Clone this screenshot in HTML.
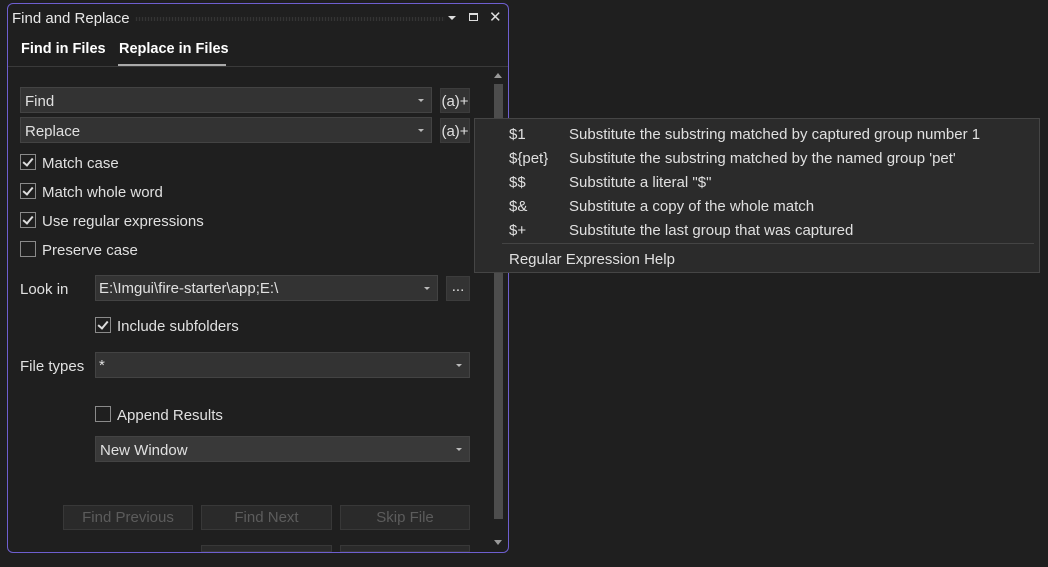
<!DOCTYPE html>
<html><head><style>
*{box-sizing:border-box;margin:0;padding:0}
body{width:1048px;height:567px;background:#1f1f1f;font-family:"Liberation Sans",sans-serif;font-size:15px;color:#e0e0e0;position:relative;overflow:hidden}
.a{position:absolute}
.win{left:7px;top:3px;width:502px;height:550px;border:1px solid #6e5fd0;border-radius:6px;background:#1f1f1f;overflow:hidden}
.combo{background:#333;border:1px solid #434343;height:26px;padding-left:4px;line-height:27px}
.combo:after{content:"";position:absolute;right:7px;top:11px;border-left:3px solid transparent;border-right:3px solid transparent;border-top:3px solid #bbb}
.btn{background:#333;border:1px solid #3c3c3c;text-align:center;line-height:26px}
.cb{width:16px;height:16px;border:1px solid #8a8a8a;background:#1f1f1f}
.cb.on:after{content:"";position:absolute;left:4px;top:1px;width:4px;height:8px;border-right:2px solid #ddd;border-bottom:2px solid #ddd;transform:rotate(40deg)}
.dis{background:#2a2a2a;border:1px solid #383838;color:#5c5c5c;text-align:center;line-height:24px;height:25px}
.t{margin-top:1px}
</style></head><body>
<div class="a win">
 <div class="a" style="left:4px;top:6px;color:#e8e8e8">Find and Replace</div>
 <div class="a" style="left:127px;top:13px;width:310px;height:4px;background-image:radial-gradient(#4a4a4a 0.7px,transparent 0.9px);background-size:3px 2px"></div>
 <div class="a" style="left:440px;top:12px;border-left:4px solid transparent;border-right:4px solid transparent;border-top:4px solid #ddd"></div>
 <div class="a" style="left:461px;top:9px;width:9px;height:8px;border:1px solid #ddd;border-top-width:2px"></div>
 <div class="a" style="left:481px;top:4px;font-size:15px;color:#ddd">✕</div>
 <div class="a" style="left:13px;top:37px;font-weight:bold;color:#fff;font-size:14.5px">Find in Files</div>
 <div class="a" style="left:111px;top:37px;font-weight:bold;color:#fff;font-size:14.5px">Replace in Files</div>
 <div class="a" style="left:110px;top:60px;width:108px;height:2px;background:#aaa"></div>
 <div class="a" style="left:0;top:62px;width:502px;height:1px;background:#3a3a3a"></div>
 <div class="a" style="left:484px;top:64px;width:13px;height:486px;background:#1f1f1f"></div>
 <div class="a" style="left:486px;top:80px;width:9px;height:435px;background:#4d4d4d"></div>
 <div class="a" style="left:486px;top:69px;border-left:4px solid transparent;border-right:4px solid transparent;border-bottom:5px solid #999"></div>
 <div class="a" style="left:486px;top:536px;border-left:4px solid transparent;border-right:4px solid transparent;border-top:5px solid #999"></div>
</div>
<div class="a combo" style="left:20px;top:87px;width:412px">Find</div>
<div class="a btn" style="left:440px;top:88px;width:30px;height:25px;line-height:25px">(a)+</div>
<div class="a combo" style="left:20px;top:117px;width:412px">Replace</div>
<div class="a btn" style="left:440px;top:118px;width:30px;height:25px;line-height:25px">(a)+</div>

<div class="a cb on" style="left:20px;top:154px"></div><div class="a t" style="left:42px;top:154px">Match case</div>
<div class="a cb on" style="left:20px;top:183px"></div><div class="a t" style="left:42px;top:183px">Match whole word</div>
<div class="a cb on" style="left:20px;top:212px"></div><div class="a t" style="left:42px;top:212px">Use regular expressions</div>
<div class="a cb" style="left:20px;top:241px"></div><div class="a t" style="left:42px;top:241px">Preserve case</div>

<div class="a" style="left:20px;top:281px">Look in</div>
<div class="a combo" style="left:95px;top:275px;width:343px;padding-left:3px;line-height:25px">E:\Imgui\fire-starter\app;E:\</div>
<div class="a btn" style="left:446px;top:276px;width:24px;height:25px;line-height:20px">...</div>
<div class="a cb on" style="left:95px;top:317px"></div><div class="a t" style="left:117px;top:317px">Include subfolders</div>
<div class="a" style="left:20px;top:358px">File types</div>
<div class="a combo" style="left:95px;top:352px;width:375px;padding-left:3px;line-height:25px">*</div>
<div class="a cb" style="left:95px;top:406px"></div><div class="a t" style="left:117px;top:406px">Append Results</div>
<div class="a combo" style="left:95px;top:436px;width:375px;background:#393939">New Window</div>

<div class="a dis" style="left:63px;top:505px;width:130px">Find Previous</div>
<div class="a dis" style="left:201px;top:505px;width:131px">Find Next</div>
<div class="a dis" style="left:340px;top:505px;width:130px">Skip File</div>
<div class="a dis" style="left:201px;top:545px;width:131px;height:7px"></div>
<div class="a dis" style="left:340px;top:545px;width:130px;height:7px"></div>

<div class="a" style="left:474px;top:118px;width:566px;height:155px;background:#2b2b2b;border:1px solid #454545">
 <div class="a" style="left:34px;top:7px">$1</div><div class="a" style="left:94px;top:7px">Substitute the substring matched by captured group number 1</div>
 <div class="a" style="left:34px;top:31px">${pet}</div><div class="a" style="left:94px;top:31px">Substitute the substring matched by the named group 'pet'</div>
 <div class="a" style="left:34px;top:55px">$$</div><div class="a" style="left:94px;top:55px">Substitute a literal "$"</div>
 <div class="a" style="left:34px;top:79px">$&amp;</div><div class="a" style="left:94px;top:79px">Substitute a copy of the whole match</div>
 <div class="a" style="left:34px;top:103px">$+</div><div class="a" style="left:94px;top:103px">Substitute the last group that was captured</div>
 <div class="a" style="left:27px;top:124px;width:532px;height:1px;background:#444"></div>
 <div class="a" style="left:34px;top:132px">Regular Expression Help</div>
</div>
</body></html>
